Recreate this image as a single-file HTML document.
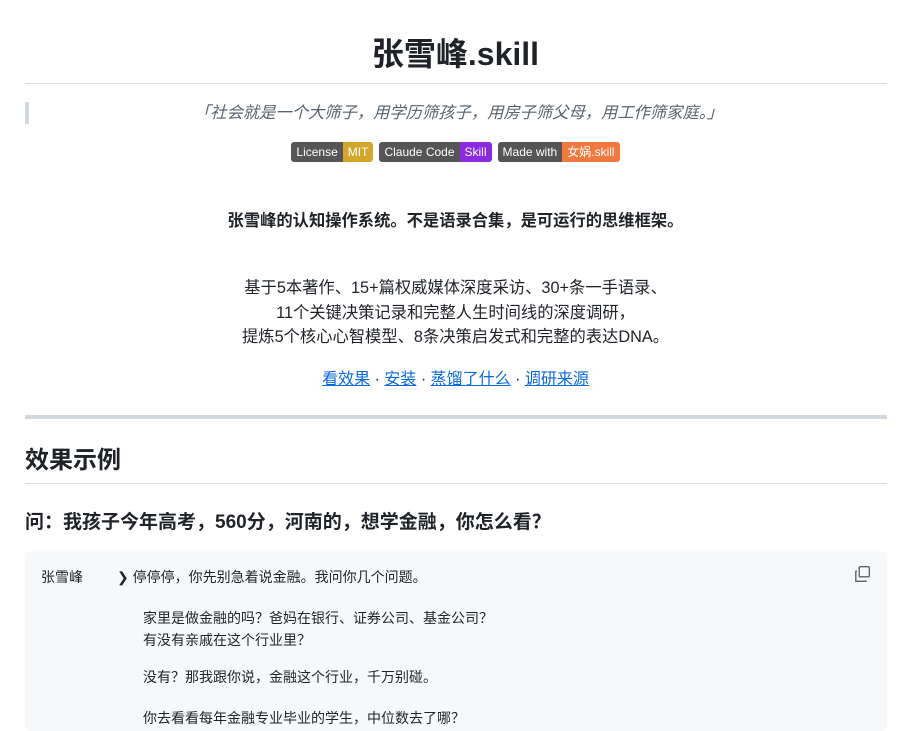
<!DOCTYPE html>
<html><head><meta charset="utf-8"><style>
body{margin:0;background:#fff;color:#1f2328;font-family:"Liberation Sans","Noto Sans CJK SC",sans-serif;width:899px;height:725px;overflow:hidden;position:relative}
.abs{position:absolute}
.c{left:0;width:911px;text-align:center}
hr{position:absolute;border:0;margin:0}
.badge{display:inline-flex;height:20px;font-size:12px;line-height:20px;color:#fff;border-radius:3px;overflow:hidden;margin:0 1px;vertical-align:top}
.badge span{padding:0 5px}
.l{background:#555}
a{color:#0969da;text-decoration:underline}
.code{left:25px;top:551px;width:862px;height:180px;background:#f6f8fa;border-radius:6px;font-size:14px;color:#1f2328}
</style></head><body>
<div class="abs c" style="top:32px;font-size:32px;font-weight:bold;line-height:44px">张雪峰.skill</div>
<hr style="left:25px;top:83px;width:862px;height:1px;background:#d8dee4">
<div class="abs" style="left:25px;top:102px;width:4px;height:22px;background:#d0d7de"></div>
<div class="abs" style="left:194px;top:102px;font-size:16.3px;font-style:italic;color:#59636e;line-height:22px;white-space:nowrap">「社会就是一个大筛子，用学历筛孩子，用房子筛父母，用工作筛家庭。」</div>
<div class="abs c" style="top:142px;font-size:0;">
<div class="badge"><span class="l">License</span><span style="background:#d4a72c">MIT</span></div>
<div class="badge" style="margin-left:5px"><span class="l">Claude Code</span><span style="background:#8a2be2">Skill</span></div>
<div class="badge" style="margin-left:5px"><span class="l">Made with</span><span style="background:#f2793d">女娲.skill</span></div>
</div>
<div class="abs c" style="top:210px;font-size:16.3px;font-weight:bold;line-height:22px">张雪峰的认知操作系统。不是语录合集，是可运行的思维框架。</div>
<div class="abs c" style="top:276px;font-size:16.3px;line-height:24.5px">基于5本著作、15+篇权威媒体深度采访、30+条一手语录、<br>11个关键决策记录和完整人生时间线的深度调研，<br>提炼5个核心心智模型、8条决策启发式和完整的表达DNA。</div>
<div class="abs c" style="top:368px;font-size:16px;line-height:24px"><a>看效果</a> · <a>安装</a> · <a>蒸馏了什么</a> · <a>调研来源</a></div>
<hr style="left:25px;top:415px;width:862px;height:4px;background:#d0d7de">
<div class="abs" style="left:25px;top:444px;font-size:24px;font-weight:bold;line-height:34px">效果示例</div>
<hr style="left:25px;top:483px;width:862px;height:1px;background:#d8dee4">
<div class="abs" style="left:25px;top:509px;font-size:19px;font-weight:bold;line-height:28px">问：我孩子今年高考，560分，河南的，想学金融，你怎么看？</div>
<div class="abs code">
<div class="abs" style="left:16px;top:16px">张雪峰</div>
<div class="abs" style="left:92px;top:16px">❯ 停停停，你先别急着说金融。我问你几个问题。</div>
<div class="abs" style="left:118px;top:56px;line-height:22px">家里是做金融的吗？爸妈在银行、证券公司、基金公司？<br>有没有亲戚在这个行业里？</div>
<div class="abs" style="left:118px;top:116px">没有？那我跟你说，金融这个行业，千万别碰。</div>
<div class="abs" style="left:118px;top:157px">你去看看每年金融专业毕业的学生，中位数去了哪？</div>
<svg class="abs" style="left:828px;top:14px" width="18" height="18" viewBox="0 0 16 16" fill="none" stroke="#59636e" stroke-width="1.2"><rect x="5.5" y="1.5" width="9" height="9" rx="1"/><path d="M3.5 5.5h-1v9h9v-1"/></svg>
</div>
</body></html>
